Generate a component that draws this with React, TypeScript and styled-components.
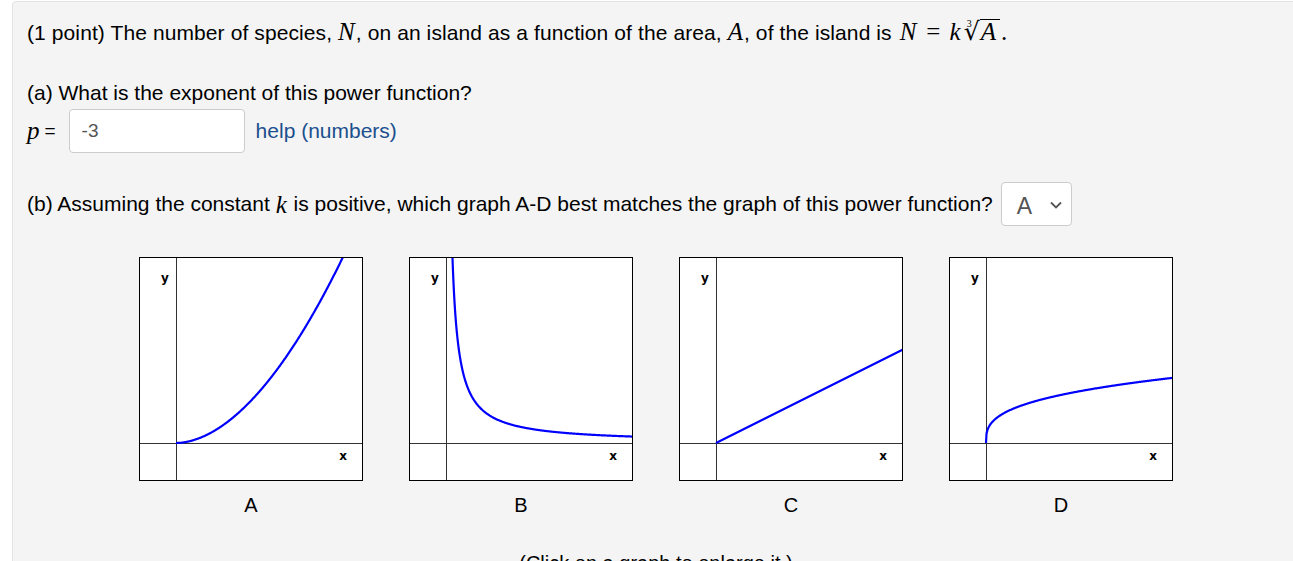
import React from 'react';
import styled, { createGlobalStyle } from 'styled-components';

const GlobalStyle = createGlobalStyle`
	html, body {
		margin: 0;
		padding: 0;
		background: #ffffff;
		overflow: hidden;
	}
`;

type GraphDef = {
	label: string;
	fn: (dx: number) => number;
	from: number;
};

const OX = 37;
const OY = 186;
const SIZE = 224;

const graphs: GraphDef[] = [
	{ label: 'A', fn: (dx) => 186 * Math.pow(dx / 167, 1.85), from: 0 },
	{ label: 'B', fn: (dx) => 1200 / dx, from: 6.4 },
	{ label: 'C', fn: (dx) => dx * 0.5, from: 0 },
	{ label: 'D', fn: (dx) => 11.4 * Math.cbrt(dx), from: 0 },
];

const buildPoints = (g: GraphDef) => {
	const pts: string[] = [];
	for (let dx = g.from; dx <= SIZE - OX; dx += 0.5) {
		const dy = g.fn(dx);
		if (dy > OY + 2) continue;
		pts.push(`${(OX + dx).toFixed(2)},${(OY - dy).toFixed(2)}`);
	}
	return pts.join(' ');
};

const Graph = ({ g }: { g: GraphDef }) => (
	<GraphCell>
		<svg width={SIZE} height={SIZE} viewBox={`0 0 ${SIZE} ${SIZE}`}>
			<defs>
				<clipPath id={`clip-${g.label}`}>
					<rect x="1" y="1" width={SIZE - 2} height={SIZE - 2} />
				</clipPath>
			</defs>
			<rect x="0.5" y="0.5" width={SIZE - 1} height={SIZE - 1} fill="#fff" stroke="#000" />
			<line x1={OX + 0.5} y1="1" x2={OX + 0.5} y2={SIZE - 1} stroke="#333" />
			<line x1="1" y1={OY + 0.5} x2={SIZE - 1} y2={OY + 0.5} stroke="#333" />
			<AxisText x="26" y="25" textAnchor="middle">y</AxisText>
			<AxisText x="204" y="203" textAnchor="middle">x</AxisText>
			<polyline
				points={buildPoints(g)}
				fill="none"
				stroke="#0000ff"
				strokeWidth="2.2"
				strokeLinejoin="round"
				clipPath={`url(#clip-${g.label})`}
			/>
		</svg>
		<GraphLabel>{g.label}</GraphLabel>
	</GraphCell>
);

const App = () => {
	return (
		<>
			<GlobalStyle />
			<Panel>
				<Line>
					(1 point) The number of species, <MathVar>N</MathVar>, on an island as a function of the area,{' '}
					<MathVar>A</MathVar>, of the island is{' '}
					<MathExpr>
						<MathVar>N</MathVar>
						<MathOp>=</MathOp>
						<MathVar>k</MathVar>
						<RootIndex>3</RootIndex>
						<RootSign>√</RootSign>
						<Radicand>
							<MathVar>A</MathVar>
						</Radicand>
						<MathDot>.</MathDot>
					</MathExpr>
				</Line>

				<Question>(a) What is the exponent of this power function?</Question>
				<AnswerRow>
					<MathVar>p</MathVar>
					<Equals>=</Equals>
					<AnswerInput defaultValue="-3" />
					<HelpLink href="#">help (numbers)</HelpLink>
				</AnswerRow>

				<SelectRow>
					(b) Assuming the constant&nbsp;<MathVar>k</MathVar>&nbsp;is positive, which graph A-D best matches the graph of this
					power function?
					<SelectBox>
						<span>A</span>
						<svg width="14" height="14" viewBox="0 0 14 14">
							<path d="M2 4.5 L7 9.5 L12 4.5" fill="none" stroke="#555" strokeWidth="1.8" />
						</svg>
					</SelectBox>
				</SelectRow>

				<GraphRow>
					{graphs.map((g) => (
						<Graph key={g.label} g={g} />
					))}
				</GraphRow>

				<Caption>(Click on a graph to enlarge it.)</Caption>
			</Panel>
		</>
	);
};

export default App;

const Panel = styled.div`
	margin: 1px 0 0 12px;
	width: 1258px;
	min-height: 600px;
	padding: 16px 15px 20px 14px;
	background: #f4f4f4;
	border: 1px solid #e3e3e3;
	border-radius: 4px 4px 0 0;
	font-family: 'Liberation Sans', Arial, sans-serif;
	font-size: 21px;
	color: #000;
`;

const Line = styled.div`
	line-height: 30px;
	height: 30px;
	white-space: nowrap;
	letter-spacing: 0.1px;
`;

const Question = styled.div`
	margin-top: 30px;
	line-height: 30px;
`;

const MathVar = styled.span`
	font-family: 'Liberation Serif', 'Times New Roman', serif;
	font-style: italic;
	font-size: 25px;
	line-height: 1;
	letter-spacing: 1px;
`;

const MathExpr = styled.span`
	white-space: nowrap;
	margin-left: 2px;
`;

const MathOp = styled.span`
	font-family: 'Liberation Serif', serif;
	font-size: 25px;
	line-height: 1;
	margin: 0 9px;
`;

const RootIndex = styled.span`
	font-family: 'Liberation Serif', serif;
	font-size: 10px;
	line-height: 0;
	vertical-align: 13px;
	margin: 0 -8px 0 5px;
`;

const RootSign = styled.span`
	font-family: 'DejaVu Serif', serif;
	font-size: 25px;
	line-height: 1;
`;

const Radicand = styled.span`
	border-top: 1px solid #000;
	padding: 1px 3px 0 1px;
`;

const MathDot = styled.span`
	font-family: 'Liberation Serif', serif;
	font-size: 25px;
	line-height: 1;
	margin-left: 1px;
`;

const AnswerRow = styled.div`
	display: flex;
	align-items: center;
	height: 45px;
`;

const Equals = styled.span`
	margin: 0 13px 0 4px;
	font-size: 19px;
`;

const AnswerInput = styled.input`
	box-sizing: border-box;
	width: 176px;
	height: 44px;
	padding: 0 12px;
	border: 1px solid #cccccc;
	border-radius: 4px;
	background: #fff;
	color: #555;
	font-family: 'Liberation Sans', Arial, sans-serif;
	font-size: 19px;
	outline: none;
`;

const HelpLink = styled.a`
	margin-left: 11px;
	color: #1b4f8e;
	text-decoration: none;
	font-size: 21px;
`;

const SelectRow = styled.div`
	display: flex;
	align-items: center;
	margin-top: 29px;
	height: 44px;
	white-space: nowrap;
`;

const SelectBox = styled.div`
	box-sizing: border-box;
	display: flex;
	align-items: center;
	justify-content: space-between;
	width: 71px;
	height: 44px;
	margin-left: 8px;
	padding: 5px 8px 0 15px;
	background: #fff;
	border: 1px solid #cccccc;
	border-radius: 4px;
	color: #555;
	font-size: 23px;
	svg {
		margin-top: -3px;
	}
`;

const GraphRow = styled.div`
	display: flex;
	justify-content: center;
	gap: 46px;
	margin-top: 31px;
`;

const GraphCell = styled.div`
	display: flex;
	flex-direction: column;
	align-items: center;
	svg {
		display: block;
	}
`;

const AxisText = styled.text`
	font-family: 'DejaVu Sans', sans-serif;
	font-weight: bold;
	font-size: 12px;
	fill: #000;
`;

const GraphLabel = styled.div`
	margin-top: 10px;
	line-height: 28px;
	font-size: 20px;
`;

const Caption = styled.div`
	margin-top: 33px;
	text-align: center;
	font-size: 20px;
`;
